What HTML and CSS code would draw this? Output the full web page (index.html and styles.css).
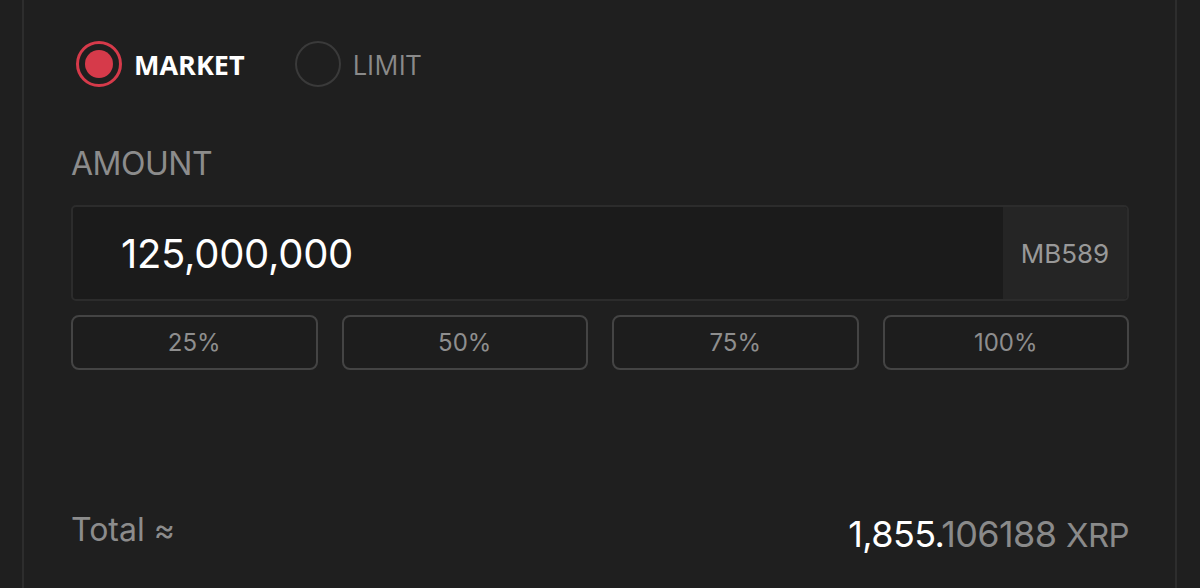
FILE: index.html
```html
<!DOCTYPE html>
<html lang="en">
<head>
    <meta charset="UTF-8">
    <title>Order Form</title>
    <link rel="stylesheet" href="styles.css">
</head>
<body>
    <div class="panel">
        <div class="order-types">
            <label class="radio active">
                <span class="dot"></span>
                <span class="radio-label">MARKET</span>
            </label>
            <label class="radio">
                <span class="dot"></span>
                <span class="radio-label">LIMIT</span>
            </label>
        </div>

        <div class="field-label">AMOUNT</div>
        <div class="amount-box">
            <div class="amount-value">125,000,000</div>
            <div class="amount-unit">MB589</div>
        </div>

        <div class="percents">
            <button>25%</button>
            <button>50%</button>
            <button>75%</button>
            <button>100%</button>
        </div>

        <div class="total">
            <span class="total-label">Total ≈</span>
            <span class="total-value"><span class="whole">1,855.</span><span class="frac">106188</span> <span class="unit">XRP</span></span>
        </div>
    </div>
</body>
</html>
```

FILE: styles.css
```css
body {
    margin: 0;
    background-color: #1f1f1f;
    font-family: Inter, "Open Sans", sans-serif;
    color: #fff;
}

.panel {
    margin: 0 23px 0 22px;
    height: 588px;
    box-sizing: border-box;
    border-left: 2px solid #2d2d2d;
    border-right: 2px solid #2d2d2d;
    padding: 41px 46px 0 47px;
}

.order-types {
    display: flex;
    align-items: center;
    height: 46px;
    padding-left: 5px;
}

.radio {
    display: flex;
    align-items: center;
    margin-right: 50px;
}

.dot {
    width: 46px;
    height: 46px;
    box-sizing: border-box;
    border: 2px solid #3a3a3a;
    border-radius: 50%;
    display: flex;
    align-items: center;
    justify-content: center;
    margin-right: 12px;
}

.radio.active .dot {
    border: 3px solid #d63a4a;
}

.radio.active .dot::after {
    content: "";
    width: 28px;
    height: 28px;
    border-radius: 50%;
    background-color: #d63a4a;
}

.radio-label {
    font-family: "Open Sans", sans-serif;
    font-size: 27px;
    color: #8a8a8a;
}

.radio.active .radio-label {
    font-weight: 700;
    color: #fff;
}

.field-label {
    margin-top: 57px;
    font-size: 32px;
    letter-spacing: -0.5px;
    color: #8c8c8c;
    line-height: 40px;
}

.amount-box {
    margin-top: 21px;
    display: flex;
    height: 96px;
    box-sizing: border-box;
    border: 2px solid #2c2c2c;
    border-radius: 5px;
    background-color: #1b1b1b;
    overflow: hidden;
}

.amount-value {
    flex: 1;
    display: flex;
    align-items: center;
    padding-left: 48px;
    font-size: 40px;
    letter-spacing: -0.3px;
}

.amount-unit {
    width: 124px;
    display: flex;
    align-items: center;
    justify-content: center;
    background-color: #252525;
    font-size: 26px;
    color: #999;
}

.percents {
    margin-top: 14px;
    display: grid;
    grid-template-columns: repeat(4, 1fr);
    gap: 24px;
}

.percents button {
    height: 55px;
    background-color: #1d1d1d;
    border: 2px solid #444;
    border-radius: 8px;
    font-family: Inter, sans-serif;
    font-size: 24px;
    color: #8e8e8e;
}

.total {
    margin-top: 138px;
    display: flex;
    justify-content: space-between;
    align-items: flex-end;
}

.total-label {
    font-size: 32px;
    line-height: 44px;
    margin-bottom: 5px;
    color: #8c8c8c;
}

.total-value {
    font-size: 36px;
    line-height: 44px;
    letter-spacing: -0.6px;
}

.frac,
.unit {
    color: #8a8a8a;
}

.unit {
    font-size: 33px;
}
```
